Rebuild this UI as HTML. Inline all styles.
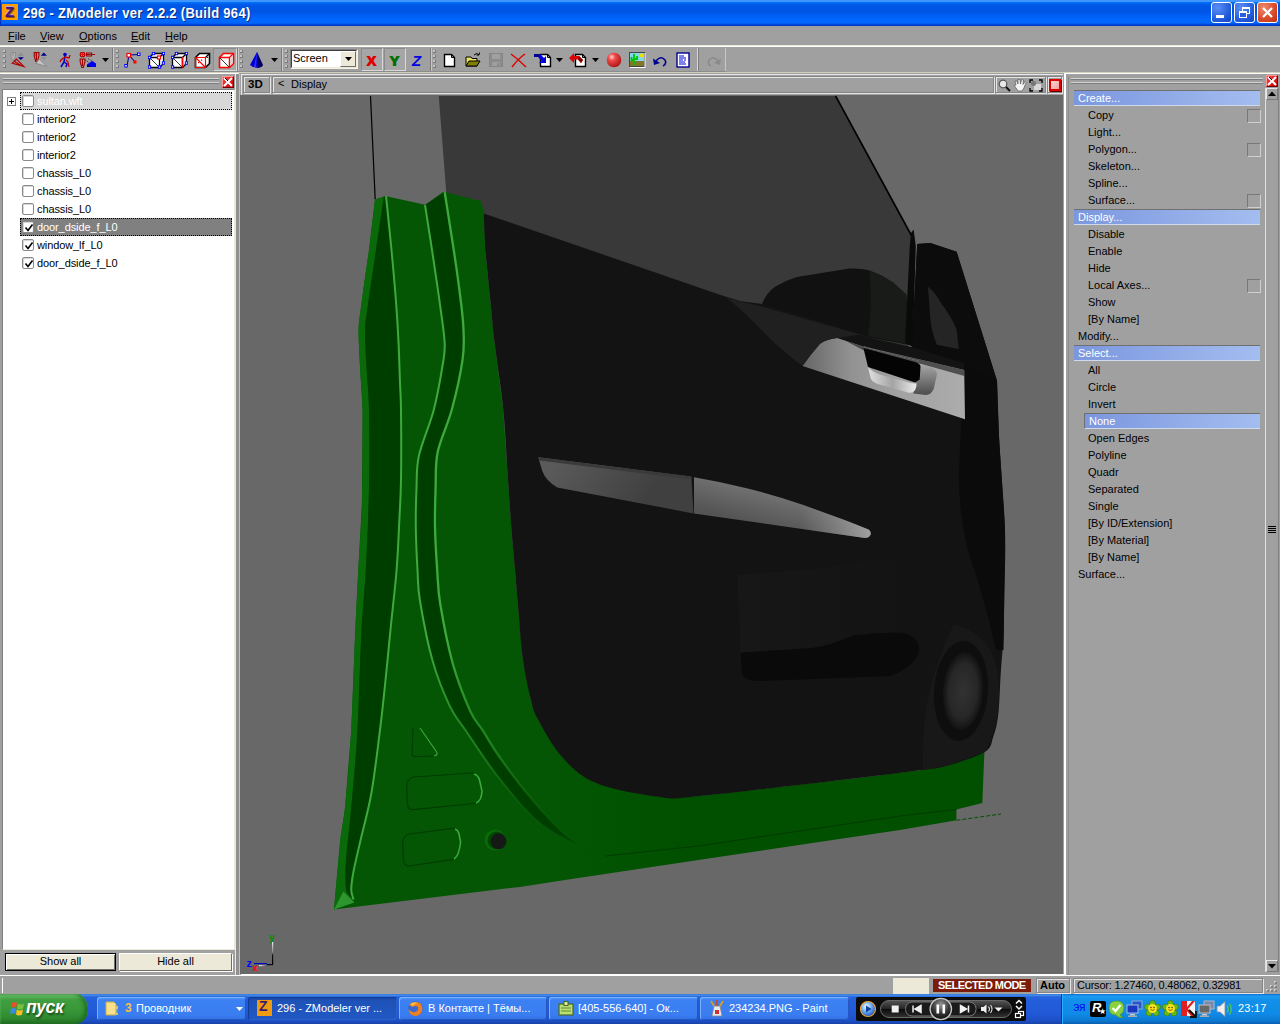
<!DOCTYPE html>
<html><head><meta charset="utf-8"><title>296 - ZModeler ver 2.2.2 (Build 964)</title>
<style>
*{box-sizing:border-box;margin:0;padding:0}
html,body{width:1280px;height:1024px;overflow:hidden;background:#a0a0a0;font-family:"Liberation Sans","DejaVu Sans",sans-serif;font-size:11px;color:#000}
.abs,#root *{position:absolute}
#root{position:relative;width:1280px;height:1024px;overflow:hidden;background:#a0a0a0}
#title{left:0;top:0;width:1280px;height:26px;background:linear-gradient(#3f96ff 0,#3f96ff 1.5px,#0070fa 2.5px,#0058e6 5px,#0055e5 12px,#0060f6 16px,#0068ff 20px,#0066fc 23px,#0048dc 24.5px,#0030c4 26px)}
#title .t{left:23px;top:5px;transform:scale(1,1.1);transform-origin:0 0;color:#fff;font-weight:bold;font-size:13px;white-space:nowrap;text-shadow:1px 1px 0 #0a2a80;letter-spacing:.3px}
#menu{left:0;top:26px;width:1280px;height:20px;background:#a0a0a0}
#menu span{top:4px;font-size:11px;white-space:nowrap}
u{text-decoration:underline;position:static!important}
#tb{left:0;top:46px;width:1280px;height:28px;background:#a0a0a0}

.hl{background:#fff}.sh{background:#808080}
.sunk{border:1px solid #858585;box-shadow:inset 1px 1px 0 #e4e4e4,1px 1px 0 #e4e4e4}
.rais{border:1px solid;border-color:#e8e8e8 #7a7a7a #7a7a7a #e8e8e8}
.grip{height:2px;border-top:1px solid #d4d4d4;border-bottom:1px solid #7c7c7c}
.xbtn{width:12px;height:12px;background:linear-gradient(135deg,#ff4040,#c80000);border:1px solid;border-color:#ff9a9a #700 #700 #ff9a9a}
#left .row{left:20px;width:212px;height:18px;font-size:11px;white-space:nowrap}
#left .row .cb{left:2px;top:3px;width:12px;height:12px;background:#fff;border:1px solid #8a8a8a;border-radius:2px;box-shadow:inset 1px 1px 0 #d8d8d8}
#left .row .tx{left:17px;top:3px;letter-spacing:-.1px}
#right .it{left:1088px;font-size:11px;white-space:nowrap}
#right .hd{left:1074px;width:186px;height:16px;background:linear-gradient(90deg,#7b97de,#a4bdf0);border-top:1px solid #6f6f6f;border-bottom:1px solid #d0d8ec;color:#fff;font-size:11px}
#right .hd span{left:4px;top:1px}
#right .sq{left:1247px;width:14px;height:14px;border:1px solid;border-color:#787878 #d0d0d0 #d0d0d0 #787878}

#task{left:0;top:994px;width:1280px;height:30px;background:linear-gradient(#3168d5 0,#4993e6 1px,#2663e0 3px,#245edb 6px,#2158d5 20px,#1c4fc4 27px,#1941a5 30px)}
#task .b{top:3px;height:23px;border-radius:3px;background:linear-gradient(#5a9bf5 0,#3c81f3 3px,#3a7df0 18px,#3272e6 23px);box-shadow:inset 1px 1px 0 #7ab0ff,inset -1px -1px 0 #2458c0;color:#fff;font-size:11px;white-space:nowrap;overflow:hidden}
#task .b.act{background:linear-gradient(#1a48a8 0,#1e52b7 4px,#2058c4 23px);box-shadow:inset 1px 1px 1px #123a90,inset -1px -1px 0 #2a60c8}
#task .b span{top:5px}
</style></head><body><div id="root">
<!--TITLE-->
<div id="title"><div style="left:0;top:0;width:1px;height:26px;background:#0030b8"></div><div style="left:2px;top:4px;width:16px;height:16px;background:#ff9c00"><span style="left:3px;top:-1px;font-size:15px;font-weight:bold;color:#401080;text-shadow:1px 1px 0 #905010,0 -1px 0 #c8a0d0">Z</span></div><span class="t">296 - ZModeler ver 2.2.2 (Build 964)</span>
<div style="left:1211px;top:2px;width:21px;height:21px;border:1px solid #fff;border-radius:3px;background:radial-gradient(circle at 30% 25%,#5b8ff5,#1d56d8 70%,#1443b8)"><div style="left:4px;top:12px;width:8px;height:3px;background:#fff"></div></div>
<div style="left:1234px;top:2px;width:21px;height:21px;border:1px solid #fff;border-radius:3px;background:radial-gradient(circle at 30% 25%,#5b8ff5,#1d56d8 70%,#1443b8)"><div style="left:7px;top:4px;width:8px;height:7px;border:1px solid #fff;border-top-width:2px"></div><div style="left:4px;top:8px;width:8px;height:7px;border:1px solid #fff;border-top-width:2px;background:#2a5fdc"></div></div>
<div style="left:1257px;top:2px;width:21px;height:21px;border:1px solid #fff;border-radius:3px;background:radial-gradient(circle at 30% 25%,#ee8a6c,#d8492a 60%,#b8300f)"><svg style="left:0;top:0" width="19" height="19"><path d="M5 5 L14 14 M14 5 L5 14" stroke="#fff" stroke-width="2.2"/></svg></div>
</div>
<div style="left:1279px;top:26px;width:1px;height:20px;background:#ece9d8"></div>
<!--MENU-->
<div id="menu"><span style="left:8px"><u>F</u>ile</span><span style="left:40px"><u>V</u>iew</span><span style="left:79px"><u>O</u>ptions</span><span style="left:131px"><u>E</u>dit</span><span style="left:165px"><u>H</u>elp</span></div>
<!--TOOLBAR-->
<div id="tb">
<div style="left:0;top:-1px;width:1280px;height:1px;background:#ece9d8"></div>
<div style="left:0;top:0;width:1280px;height:1px;background:#fff"></div>
<div style="left:0;top:26px;width:1280px;height:1px;background:#d4d0c0"></div><div style="left:0;top:27px;width:239px;height:1px;background:#fff"></div>
<!--TBICONS-->
<div style="left:3px;top:4px;width:3px;height:3px;background:#7a7a7a"></div><div style="left:3px;top:4px;width:2px;height:2px;background:#c4c4c4"></div><div style="left:3px;top:9px;width:3px;height:3px;background:#7a7a7a"></div><div style="left:3px;top:9px;width:2px;height:2px;background:#c4c4c4"></div><div style="left:3px;top:14px;width:3px;height:3px;background:#7a7a7a"></div><div style="left:3px;top:14px;width:2px;height:2px;background:#c4c4c4"></div><div style="left:3px;top:19px;width:3px;height:3px;background:#7a7a7a"></div><div style="left:3px;top:19px;width:2px;height:2px;background:#c4c4c4"></div>
<svg style="left:10px;top:6px" width="16" height="16" viewBox="0 0 16 16"><path d="M1 .5h4.500v4l-1.500 3.500h-1.500L1 4.500z M3.200 .5v4" fill="#b4b4b4" stroke="#8a8a8a" stroke-width=".9"/><path d="M2.200 11.300 L6.400 7.100 L14 14.600 Z M4.300 9.200 L11 13.500 M3.500 11.700 L9 13" fill="none" stroke="#b00000" stroke-width="1.200"/><path d="M5 10 L8 11.500" stroke="#f00" stroke-width="1"/><path d="M7.800 3.800 L10.800 .5 L13.900 3.800Z" fill="#8c8c8c"/><path d="M7.800 5.200 L13.900 5.200 L10.800 8Z" fill="#000090"/></svg>
<svg style="left:33px;top:6px" width="16" height="16" viewBox="0 0 16 16"><path d="M1.200 .5h4.700v3.500l-1.400 5.500h-1.800L1.200 4z M3.500 .5v8" fill="none" stroke="#a00000" stroke-width="1.100"/><path d="M2.800 1v3" stroke="#f00" stroke-width=".8"/><path d="M2.600 11.300 L6.400 7.100 L14 14.600 Z" fill="#c4c4c4" stroke="#8a8a8a" stroke-width="1"/><path d="M7.800 3.800 L10.800 .5 L13.900 3.800Z" fill="#000090"/><path d="M7.800 5.200 L13.900 5.200 L10.800 8Z" fill="#8c8c8c"/></svg>
<svg style="left:57px;top:6px" width="16" height="16" viewBox="0 0 16 16"><circle cx="8" cy="2.5" r="1.8" fill="#0000c8"/><path d="M8 4 L7 10 L4 15 M7 10 L10 12 L9 15" fill="none" stroke="#0000c8" stroke-width="1.5"/><path d="M8 5 L12 6 L13 3 M8 5 L4 8 L3 10" fill="none" stroke="#c00000" stroke-width="1.3"/><path d="M9 8 L11 10 L12 15" fill="none" stroke="#c00000" stroke-width="1.2"/></svg>
<svg style="left:79px;top:6px" width="18" height="16" viewBox="0 0 18 16"><circle cx="3.500" cy="2.500" r="2.300" fill="none" stroke="#a00000" stroke-width="1.100"/><path d="M3.500 .5v4M1.500 2.500h4" stroke="#f00" stroke-width=".9"/><path d="M7.500 1h5v3h-5z M12.500 2.500h3.500 M7.500 2.500h4" fill="none" stroke="#a00000" stroke-width="1.100"/><path d="M1.200 7h4.700v3l-1.600 5.500h-1.500L1.200 10z M3.500 7v7" fill="none" stroke="#a00000" stroke-width="1.100"/><path d="M6.500 8 L13 13 M9 6.500 L14.500 10" stroke="#222" stroke-width="1" stroke-dasharray="1 1"/><path d="M8 12.500 L13 9 L17 11.500 V15 H9Z" fill="#0000f0"/><path d="M8 12.500 L10.500 15 H8Z" fill="#000"/></svg>
<svg style="left:102px;top:12px" width="7" height="4"><path d="M0 0H7L3.5 4Z" fill="#000"/></svg>
<div style="left:112px;top:2px;width:1px;height:23px;background:#7c7c7c"></div><div style="left:113px;top:2px;width:1px;height:23px;background:#c8c8c8"></div>
<div style="left:116px;top:4px;width:3px;height:3px;background:#7a7a7a"></div><div style="left:116px;top:4px;width:2px;height:2px;background:#c4c4c4"></div><div style="left:116px;top:9px;width:3px;height:3px;background:#7a7a7a"></div><div style="left:116px;top:9px;width:2px;height:2px;background:#c4c4c4"></div><div style="left:116px;top:14px;width:3px;height:3px;background:#7a7a7a"></div><div style="left:116px;top:14px;width:2px;height:2px;background:#c4c4c4"></div><div style="left:116px;top:19px;width:3px;height:3px;background:#7a7a7a"></div><div style="left:116px;top:19px;width:2px;height:2px;background:#c4c4c4"></div>
<svg style="left:124px;top:6px" width="17" height="16" viewBox="0 0 17 16"><path d="M3 14 L5 3 L15 2.5 M5 3 L11 10" fill="none" stroke="#0000a0" stroke-width="1.1"/><rect x="3" y="1.5" width="3.5" height="3.5" fill="#fff" stroke="#f00" stroke-width="1.2"/><rect x="9.5" y="8.5" width="3" height="3" fill="#f00"/><rect x="13.5" y="1" width="2.5" height="2.5" fill="#fff" stroke="#00f" stroke-width="1"/><rect x=".8" y="12.5" width="2.5" height="2.5" fill="#fff" stroke="#00f" stroke-width="1"/></svg>
<svg style="left:148px;top:6px" width="17" height="17" viewBox="0 0 17 17"><path d="M1.5 5.5 L5.5 1.5 H15.5 V11.5 L11.5 15.5 H1.5Z" fill="#fff" stroke="#000" stroke-width="1.3"/><path d="M1.5 5.5 H11.5 V15.5 M11.5 5.5 L15.5 1.5" fill="none" stroke="#000" stroke-width="1.3"/><path d="M2 6 L11 15" stroke="#333" stroke-width="1"/><rect x="0.30000000000000004" y="4.3" width="2.4" height="2.4" fill="#fff" stroke="#00f" stroke-width="1"/><rect x="4.3" y="0.30000000000000004" width="2.4" height="2.4" fill="#fff" stroke="#00f" stroke-width="1"/><rect x="14.3" y="0.30000000000000004" width="2.4" height="2.4" fill="#fff" stroke="#00f" stroke-width="1"/><rect x="14.3" y="9.8" width="2.4" height="2.4" fill="#fff" stroke="#00f" stroke-width="1"/><rect x="10.3" y="13.8" width="2.4" height="2.4" fill="#fff" stroke="#00f" stroke-width="1"/><rect x="0.30000000000000004" y="13.8" width="2.4" height="2.4" fill="#fff" stroke="#00f" stroke-width="1"/><rect x="9.5" y="4" width="3" height="3" fill="#fff" stroke="#f00" stroke-width="1.2"/></svg>
<svg style="left:171px;top:6px" width="17" height="17" viewBox="0 0 17 17"><path d="M1.5 5.5 L5.5 1.5 H15.5 V11.5 L11.5 15.5 H1.5Z" fill="#fff" stroke="#000" stroke-width="1.3"/><path d="M1.5 5.5 H11.5 V15.5 M11.5 5.5 L15.5 1.5" fill="none" stroke="#000" stroke-width="1.3"/><path d="M2 6 L11 15" stroke="#333" stroke-width="1"/><rect x="0.30000000000000004" y="4.3" width="2.4" height="2.4" fill="#fff" stroke="#00f" stroke-width="1"/><rect x="4.3" y="0.30000000000000004" width="2.4" height="2.4" fill="#fff" stroke="#00f" stroke-width="1"/><rect x="14.3" y="0.30000000000000004" width="2.4" height="2.4" fill="#fff" stroke="#00f" stroke-width="1"/><rect x="14.3" y="9.8" width="2.4" height="2.4" fill="#fff" stroke="#00f" stroke-width="1"/><rect x="0.30000000000000004" y="13.8" width="2.4" height="2.4" fill="#fff" stroke="#00f" stroke-width="1"/><path d="M11.5 5 V15.5" stroke="#f00" stroke-width="1.6"/></svg>
<svg style="left:194px;top:6px" width="17" height="17" viewBox="0 0 17 17"><path d="M1.5 5.5 L5.5 1.5 H15.5 V11.5 L11.5 15.5 H1.5Z" fill="#fff" stroke="#000" stroke-width="1.6"/><path d="M11.5 5.5 L15.5 1.5" stroke="#000" stroke-width="1.3"/><path d="M1.5 5.5 H11.5 V15.5 H1.5Z M2 6 L11 15" fill="none" stroke="#f00" stroke-width="1.2"/><rect x="4" y="10" width="1.2" height="1.2" fill="#c00"/><rect x="7" y="7.5" width="1.2" height="1.2" fill="#c00"/><rect x="13" y="5" width="1" height="1" fill="#c00"/></svg>
<div style="left:213px;top:2px;width:24px;height:23px;background:#a6a6a6;border:1px solid;border-color:#8c8c8c #d8d8d8 #d8d8d8 #8c8c8c"></div>
<svg style="left:218px;top:6px" width="17" height="17" viewBox="0 0 17 17"><path d="M1.5 5.5 L5.5 1.5 H15.5 V11.5 L11.5 15.5 H1.5Z" fill="#fff" stroke="#f00" stroke-width="1.6"/><path d="M1.5 5.5 H11.5 V15.5 M11.5 5.5 L15.5 1.5" fill="none" stroke="#f00" stroke-width="1.5"/><path d="M2 6 L11 15" stroke="#333" stroke-width="1"/><path d="M12 6 L15 3 V11 L12 14Z" fill="#e8c8c8"/></svg>
<div style="left:237px;top:2px;width:1px;height:23px;background:#7c7c7c"></div><div style="left:238px;top:2px;width:1px;height:23px;background:#c8c8c8"></div>
<div style="left:240px;top:4px;width:3px;height:3px;background:#7a7a7a"></div><div style="left:240px;top:4px;width:2px;height:2px;background:#c4c4c4"></div><div style="left:240px;top:9px;width:3px;height:3px;background:#7a7a7a"></div><div style="left:240px;top:9px;width:2px;height:2px;background:#c4c4c4"></div><div style="left:240px;top:14px;width:3px;height:3px;background:#7a7a7a"></div><div style="left:240px;top:14px;width:2px;height:2px;background:#c4c4c4"></div><div style="left:240px;top:19px;width:3px;height:3px;background:#7a7a7a"></div><div style="left:240px;top:19px;width:2px;height:2px;background:#c4c4c4"></div>
<svg style="left:250px;top:6px" width="14" height="16" viewBox="0 0 14 16"><path d="M7 0 L0 13 L3 15 L8 16 L12 14.5 Z" fill="#0000d8"/><path d="M7 0 L8 16 L12 14.5 L13 13Z" fill="#000060"/><path d="M7 0 L4 15 L6 15.8Z" fill="#3030ff"/></svg>
<svg style="left:271px;top:12px" width="7" height="4"><path d="M0 0H7L3.5 4Z" fill="#000"/></svg>
<div style="left:281px;top:2px;width:1px;height:23px;background:#7c7c7c"></div><div style="left:282px;top:2px;width:1px;height:23px;background:#c8c8c8"></div>
<div style="left:285px;top:4px;width:3px;height:3px;background:#7a7a7a"></div><div style="left:285px;top:4px;width:2px;height:2px;background:#c4c4c4"></div><div style="left:285px;top:9px;width:3px;height:3px;background:#7a7a7a"></div><div style="left:285px;top:9px;width:2px;height:2px;background:#c4c4c4"></div><div style="left:285px;top:14px;width:3px;height:3px;background:#7a7a7a"></div><div style="left:285px;top:14px;width:2px;height:2px;background:#c4c4c4"></div><div style="left:285px;top:19px;width:3px;height:3px;background:#7a7a7a"></div><div style="left:285px;top:19px;width:2px;height:2px;background:#c4c4c4"></div>
<div style="left:290px;top:3px;width:68px;height:20px;border:1px solid;border-color:#808080 #f4f2e6 #f4f2e6 #808080;background:#fff"></div><div style="left:291px;top:4px;width:66px;height:18px;border:1px solid;border-color:#404040 #ece9d8 #ece9d8 #404040;background:#fff"><span style="left:1px;top:1px;font-size:11px">Screen</span><div style="left:48px;top:0;width:16px;height:16px;background:#ece9d8;border:1px solid;border-color:#fff #716f64 #716f64 #fff"></div><svg style="left:53px;top:6px" width="7" height="4"><path d="M0 0H7L3.5 4Z" fill="#000"/></svg></div>
<div style="left:361px;top:2px;width:22px;height:23px;background:#a6a6a6;border:1px solid;border-color:#8c8c8c #d8d8d8 #d8d8d8 #8c8c8c"></div><div style="left:384px;top:2px;width:22px;height:23px;background:#a6a6a6;border:1px solid;border-color:#8c8c8c #d8d8d8 #d8d8d8 #8c8c8c"></div>
<span style="left:366px;top:6px;font-size:15px;font-weight:bold;color:#e00000;text-shadow:1px 0 #e00000">X</span><span style="left:389px;top:6px;font-size:15px;font-weight:bold;color:#007000;text-shadow:1px 0 #007000">Y</span><span style="left:412px;top:6px;font-size:15px;font-weight:bold;font-style:italic;color:#0000e0">Z</span>
<div style="left:430px;top:2px;width:1px;height:23px;background:#7c7c7c"></div><div style="left:431px;top:2px;width:1px;height:23px;background:#c8c8c8"></div>
<div style="left:433px;top:4px;width:3px;height:3px;background:#7a7a7a"></div><div style="left:433px;top:4px;width:2px;height:2px;background:#c4c4c4"></div><div style="left:433px;top:9px;width:3px;height:3px;background:#7a7a7a"></div><div style="left:433px;top:9px;width:2px;height:2px;background:#c4c4c4"></div><div style="left:433px;top:14px;width:3px;height:3px;background:#7a7a7a"></div><div style="left:433px;top:14px;width:2px;height:2px;background:#c4c4c4"></div><div style="left:433px;top:19px;width:3px;height:3px;background:#7a7a7a"></div><div style="left:433px;top:19px;width:2px;height:2px;background:#c4c4c4"></div>
<svg style="left:443px;top:7px" width="13" height="15" viewBox="0 0 13 15"><path d="M1.5 1.5 H8.5 L11.5 4.5 V13.5 H1.5Z" fill="#fff" stroke="#000" stroke-width="1.4"/><path d="M8.5 1.5 V4.5 H11.5" fill="none" stroke="#000" stroke-width="1"/></svg>
<svg style="left:465px;top:6px" width="16" height="16" viewBox="0 0 16 16"><path d="M1 14 V5 H6 L7 6.5 H12 V14Z" fill="#e8e060" stroke="#000" stroke-width="1"/><path d="M1 14 L4 9 H15 L12 14Z" fill="#808000" stroke="#000" stroke-width="1"/><path d="M9 3 Q12 0 14 3 M14 3 L14.5 .5 M14 3 L11.5 3" fill="none" stroke="#000" stroke-width="1"/></svg>
<svg style="left:489px;top:6px" width="15" height="16" viewBox="0 0 15 16"><rect x=".5" y="1.5" width="13" height="13" fill="#8c8c8c" stroke="#858585"/><rect x="3" y="2" width="8" height="5" fill="#a0a0a0"/><rect x="3.5" y="10" width="7" height="4" fill="#a0a0a0"/><rect x="8" y="11" width="2" height="3" fill="#8c8c8c"/></svg>
<svg style="left:510px;top:6px" width="17" height="16" viewBox="0 0 17 16"><path d="M1 2 Q8 7 16 15 M15 2 Q9 6 2 15" fill="none" stroke="#e00000" stroke-width="1.5"/></svg>
<svg style="left:534px;top:6px" width="18" height="16" viewBox="0 0 18 16"><g transform="translate(5,1)"><path d="M1.5 1.5 H8.5 L11.5 4.5 V13.5 H1.5Z" fill="#fff" stroke="#000" stroke-width="1.4"/><path d="M8.5 1.5 V4.5 H11.5" fill="none" stroke="#000" stroke-width="1"/></g><path d="M0 2 H6 L10 6 L12 4 V11 H5 L7.5 8.5 L4 5 H0Z" fill="#0000e0"/><path d="M0 2H5V5H0Z" fill="#000090"/></svg>
<svg style="left:556px;top:12px" width="7" height="4"><path d="M0 0H7L3.5 4Z" fill="#000"/></svg>
<svg style="left:569px;top:6px" width="18" height="16" viewBox="0 0 18 16"><g transform="translate(5,1)"><path d="M1.5 1.5 H8.5 L11.5 4.5 V13.5 H1.5Z" fill="#fff" stroke="#000" stroke-width="1.4"/><path d="M8.5 1.5 V4.5 H11.5" fill="none" stroke="#000" stroke-width="1"/></g><path d="M0 6 L5 1 V4 H10 L14 8 L12 11 L9 7.5 H5 V11Z" fill="#e00000"/><path d="M10 4 L14 8 L12 11 L9 7.5Z" fill="#800000"/></svg>
<svg style="left:592px;top:12px" width="7" height="4"><path d="M0 0H7L3.5 4Z" fill="#000"/></svg>
<svg style="left:606px;top:6px" width="16" height="16" viewBox="0 0 16 16"><defs><radialGradient id="rb" cx=".35" cy=".3" r=".7"><stop offset="0" stop-color="#ffd0d0"/><stop offset=".35" stop-color="#f04848"/><stop offset="1" stop-color="#b01818"/></radialGradient></defs><circle cx="8" cy="8" r="7.3" fill="url(#rb)"/></svg>
<svg style="left:629px;top:6px" width="17" height="16" viewBox="0 0 17 16"><rect x=".5" y=".5" width="15" height="14" fill="#80d8e8" stroke="#444"/><rect x="1" y="9" width="14" height="5" fill="#807828"/><path d="M5 13 V2 M2.5 5 V8 H5 M8 4 V7 H5" fill="none" stroke="#00c000" stroke-width="1.8"/><circle cx="12.5" cy="3.5" r="2" fill="#f0e000"/><path d="M1 15.5 H16 V1" fill="none" stroke="#fff" stroke-width="1"/></svg>
<svg style="left:653px;top:9px" width="15" height="12" viewBox="0 0 15 12"><path d="M3 6 Q8 0 12 5 Q14 9 10 11" fill="none" stroke="#000090" stroke-width="1.6"/><path d="M0 3.5 L1 10 L7 8Z" fill="#000090"/></svg>
<svg style="left:676px;top:6px" width="14" height="16" viewBox="0 0 14 16"><rect x="1" y="1" width="12" height="14" fill="#fff" stroke="#000090" stroke-width="1.4"/><path d="M3 4H8M3 6H10M3 8H7M8 8H10M3 10H9M3 12H10" stroke="#0000e0" stroke-width="1.2"/></svg>
<div style="left:697px;top:2px;width:1px;height:23px;background:#d8d8d8"></div><div style="left:698px;top:2px;width:1px;height:23px;background:#7c7c7c"></div>
<svg style="left:707px;top:9px" width="15" height="12" viewBox="0 0 15 12"><path d="M11 6 Q6 0 2 5 Q0 9 4 11" fill="none" stroke="#8a8a8a" stroke-width="1.6"/><path d="M14 3.5 L13 10 L7 8Z" fill="#8a8a8a"/></svg>
<div style="left:725px;top:2px;width:1px;height:23px;background:#c8c8c8"></div>
<div style="left:0;top:25px;width:726px;height:1px;background:#8c8c8c"></div>
<!--/TBICONS-->
</div>
<div id="left" style="left:0;top:74px;width:240px;height:902px">
<div class="grip" style="left:3px;top:4px;width:216px"></div><div class="grip" style="left:3px;top:8px;width:216px"></div>
<div class="xbtn" style="left:222px;top:2px"><svg style="left:0;top:0" width="10" height="10"><path d="M1 1 L9 9 M9 1 L1 9" stroke="#fff" stroke-width="2"/><path d="M2 1 L5 4" stroke="#000" stroke-width="1"/></svg></div>
<div style="left:2px;top:15px;width:233px;height:861px;background:#fff;border:1px solid;border-color:#808080 #ece9d8 #ece9d8 #808080"></div>
<div class="row" style="top:18px;background:#d8d8d8;outline:1px dotted #000;outline-offset:-1px;color:#fff"><div class="cb"></div><span class="tx">sultan.wft</span></div>
<div class="row" style="top:36px;"><div class="cb"></div><span class="tx">interior2</span></div>
<div class="row" style="top:54px;"><div class="cb"></div><span class="tx">interior2</span></div>
<div class="row" style="top:72px;"><div class="cb"></div><span class="tx">interior2</span></div>
<div class="row" style="top:90px;"><div class="cb"></div><span class="tx">chassis_L0</span></div>
<div class="row" style="top:108px;"><div class="cb"></div><span class="tx">chassis_L0</span></div>
<div class="row" style="top:126px;"><div class="cb"></div><span class="tx">chassis_L0</span></div>
<div class="row" style="top:144px;background:#808080;outline:1px dotted #000;outline-offset:-1px;color:#fff"><div class="cb"><svg style="left:1px;top:1px" width="10" height="10"><path d="M1.5 4.5 L4 7.5 L8.5 1.5" fill="none" stroke="#000" stroke-width="1.6"/></svg></div><span class="tx">door_dside_f_L0</span></div>
<div class="row" style="top:162px;"><div class="cb"><svg style="left:1px;top:1px" width="10" height="10"><path d="M1.5 4.5 L4 7.5 L8.5 1.5" fill="none" stroke="#000" stroke-width="1.6"/></svg></div><span class="tx">window_lf_L0</span></div>
<div class="row" style="top:180px;"><div class="cb"><svg style="left:1px;top:1px" width="10" height="10"><path d="M1.5 4.5 L4 7.5 L8.5 1.5" fill="none" stroke="#000" stroke-width="1.6"/></svg></div><span class="tx">door_dside_f_L0</span></div>
<div style="left:7px;top:23px;width:9px;height:9px;border:1px solid #808080;background:#fff"><div style="left:1px;top:3px;width:5px;height:1px;background:#000"></div><div style="left:3px;top:1px;width:1px;height:5px;background:#000"></div></div>
<div style="left:5px;top:879px;width:111px;height:18px;background:#ece9d8;border:1px solid #000;box-shadow:inset 1px 1px 0 #fff,inset -1px -1px 0 #716f64;text-align:center;font-size:11px;line-height:15px">Show all</div>
<div style="left:119px;top:879px;width:113px;height:18px;background:#ece9d8;border:1px solid;border-color:#fff #716f64 #716f64 #fff;box-shadow:1px 1px 0 #fff;text-align:center;font-size:11px;line-height:15px">Hide all</div>
<div style="left:235px;top:0;width:1px;height:901px;background:#e8e8e8"></div><div style="left:236px;top:0;width:3px;height:902px;background:#909090"></div>
<div style="left:239px;top:0;width:1px;height:902px;background:#c4c0b0"></div>
</div>
<div id="vph" style="left:241px;top:74px;width:822px;height:21px">
<div style="left:0;top:0;width:822px;height:1px;background:#e8e8e8"></div><div style="left:0;top:0;width:1px;height:21px;background:#e8e8e8"></div>
<div class="sunk" style="left:2px;top:2px;width:27px;height:17px"><span style="left:4px;top:1px;font-weight:bold;font-size:11.5px">3D</span></div>
<div class="sunk" style="left:31px;top:2px;width:722px;height:17px"><span style="left:5px;top:0;font-size:11px">&lt;</span><span style="left:18px;top:1px;font-size:11px">Display</span></div>
<div class="sunk" style="left:754px;top:2px;width:51px;height:17px"></div>
<div class="sunk" style="left:806px;top:2px;width:15px;height:17px"></div>
<svg style="left:757px;top:5px" width="13" height="13"><circle cx="5" cy="5" r="3.8" fill="#e8e8e8" stroke="#555" stroke-width="1.2"/><path d="M8 8 L12 12" stroke="#111" stroke-width="2"/></svg>
<svg style="left:772px;top:4px" width="14" height="14"><path d="M3 7 L2 3 L4 3 L5 6 L5 1.5 L7 1.5 L7.5 6 L8.5 1.5 L10.5 2 L10 6.5 L12 3.5 L13 4.5 L11 10 L9 13 H5 L3 10 L1 7.5 Z" fill="#f4f4f4" stroke="#666" stroke-width=".8"/></svg>
<svg style="left:788px;top:5px" width="14" height="13"><path d="M1 4V1H4M10 1H13V4M13 9V12H10M4 12H1V9" fill="none" stroke="#000" stroke-width="1.3"/><rect x="5" y="5" width="7" height="6" fill="#d8d8d8"/><circle cx="4.5" cy="4.5" r="2.5" fill="#777"/></svg>
<div style="left:808px;top:5px;width:12px;height:12px;border:2px solid #e00000;background:linear-gradient(135deg,#ffd8d8,#f0a0a0);box-shadow:1px 1px 0 #600"></div>
</div>
<svg id="vp" style="left:240px;top:95px" width="823" height="879" viewBox="240 95 823 879">
<rect x="240" y="95" width="823" height="879" fill="#686868"/>
<!--SCENE-->
<defs><linearGradient id="gi" x1="0" x2="1"><stop offset="0" stop-color="#666"/><stop offset=".3" stop-color="#929292"/><stop offset=".6" stop-color="#a2a2a2"/><stop offset="1" stop-color="#acacac"/></linearGradient><linearGradient id="gb" x1="0" y1="0" x2="0" y2="1"><stop offset="0" stop-color="#a8a8a8"/><stop offset="1" stop-color="#4c4c4c"/></linearGradient><linearGradient id="gh2" x1="0" x2="1"><stop offset="0" stop-color="#e0e0e0"/><stop offset=".5" stop-color="#a4a4a4"/><stop offset="1" stop-color="#ececec"/></linearGradient><linearGradient id="gs" x1="0" x2="1"><stop offset="0" stop-color="#5c5c5c"/><stop offset=".7" stop-color="#6c6c6c"/><stop offset="1" stop-color="#b0b0b0"/></linearGradient><linearGradient id="gh" x1="0" y1="0" x2="1" y2="0"><stop offset="0" stop-color="#fff"/><stop offset="1" stop-color="#888"/></linearGradient><radialGradient id="spk"><stop offset="0" stop-color="#323232"/><stop offset=".7" stop-color="#272727"/><stop offset="1" stop-color="#121212"/></radialGradient><linearGradient id="l2f" gradientUnits="userSpaceOnUse" x1="0" y1="640" x2="0" y2="860"><stop offset="0" stop-color="#3caa3c"/><stop offset=".5" stop-color="#1c7e1c"/><stop offset="1" stop-color="#045604" stop-opacity="0"/></linearGradient></defs>
<polygon points="438.75,96 835.6,96 911.7,236 908,370 485,250 446.25,192.3" fill="#393939"/>
<path d="M370.5 96 L375.2 199.4" stroke="#000" stroke-width="1.2"/>
<path d="M835.6 96 L911.7 236" stroke="#000" stroke-width="1.6"/>
<defs><linearGradient id="gg" gradientUnits="userSpaceOnUse" x1="540" y1="0" x2="680" y2="0"><stop offset="0" stop-color="#045604"/><stop offset="1" stop-color="#005000"/></linearGradient></defs>
<polygon points="375,199.4 385.3,196 425.2,204.8 443,192 446,192.3 481.4,201.25 483.75,213.4 485.3,250 490,297 494.7,343.75 503.3,410 508,480 511.9,535 515,570 518.3,610 523,660 531,700 538.3,720 562.5,757.5 596,783 659.4,797 700,796 860,777.7 921,770 946.3,766 984.4,752.3 982.3,803 956.4,809.4 956.4,820.3 900,830 700,859.8 565,880 520,886.9 334,909.5 340.3,840 345,808 351.25,730 355.2,632.5 358.3,570 361.9,503.75 362.6,410 360.3,372 358.75,340.6 358.75,325 363.4,289 369,250 375,199.4" fill="url(#gg)"/>
<path d="M375 199.4C374.0 207.8 370.9 235.1 369 250C367.1 264.9 365.1 276.5 363.4 289C361.7 301.5 359.5 316.4 358.75 325C358.0 333.6 358.5 332.8 358.75 340.6C359.0 348.4 359.7 360.4 360.3 372C360.9 383.6 362.3 388.0 362.6 410C362.9 432.0 362.6 477.1 361.9 503.75C361.2 530.4 359.4 548.5 358.3 570C357.2 591.5 356.4 605.8 355.2 632.5C354.0 659.2 352.9 700.8 351.25 730C349.6 759.2 346.8 789.7 345 808C343.2 826.3 342.1 823.1 340.3 840C338.5 856.9 335.1 897.9 334 909.5L353.6 899.4C352.8 898.7 350.3 897.1 349 895C347.7 892.9 346.3 892.8 345.8 887C345.3 881.2 345.1 873.2 346 860C346.9 846.8 349.3 829.7 351.25 808C353.2 786.3 355.8 759.2 357.5 730C359.2 700.8 360.0 659.2 361.4 632.5C362.8 605.8 364.5 594.1 365.8 570C367.1 545.9 368.5 514.7 369 488C369.5 461.3 369.4 430.2 369 410C368.6 389.8 367.2 380.2 366.5 367C365.8 353.8 364.8 341.4 365 331C365.2 320.6 366.2 318.2 368 304.7C369.8 291.2 373.4 267.9 376 250C378.6 232.1 382.5 205.8 383.75 197Z" fill="#0a6a0a"/>
<path d="M383.75 197C382.5 205.8 378.6 232.1 376 250C373.4 267.9 369.8 291.2 368 304.7C366.2 318.2 365.2 320.6 365 331C364.8 341.4 365.8 353.8 366.5 367C367.2 380.2 368.6 389.8 369 410C369.4 430.2 369.5 461.3 369 488C368.5 514.7 367.1 545.9 365.8 570C364.5 594.1 362.8 605.8 361.4 632.5C360.0 659.2 359.2 700.8 357.5 730C355.8 759.2 353.2 786.3 351.25 808C349.3 829.7 346.9 846.8 346 860C345.1 873.2 345.3 881.2 345.8 887C346.3 892.8 347.7 892.9 349 895C350.3 897.1 352.8 898.7 353.6 899.4L353.6 899.4C353.2 897.8 351.2 894.7 351.25 890C351.2 885.3 352.0 879.3 353.6 871C355.2 862.7 357.6 853.1 360.6 840C363.6 826.9 368.3 810.8 371.5 792.5C374.7 774.2 377.6 748.9 380 730C382.4 711.1 383.8 696.9 385.6 679.4C387.4 661.9 389.2 642.9 391 624.7C392.8 606.5 395.2 587.6 396.6 570C398.0 552.4 398.7 534.0 399.4 519C400.1 504.0 400.7 498.2 401 480C401.3 461.8 401.2 426.2 401 410C400.8 393.8 400.4 394.0 400 383C399.6 372.0 399.2 356.8 398.6 343.75C398.0 330.7 397.4 320.3 396.25 304.7C395.1 289.1 393.2 268.1 391.5 250C389.8 231.9 386.9 205.0 386 196Z" fill="#003e00"/>
<path d="M425 205C426.2 212.5 429.5 233.4 432 250C434.5 266.6 437.9 289.1 440 304.7C442.1 320.3 444.3 333.4 444.7 343.75C445.1 354.1 444.1 356.0 442.3 367C440.5 378.0 437.6 395.3 433.75 410C429.9 424.7 421.9 442.3 419 455.3C416.1 468.3 417.0 476.1 416.5 488C416.0 499.9 415.6 513.3 415.8 527C416.0 540.7 416.8 557.7 417.5 570C418.2 582.3 417.5 585.9 420 601C422.5 616.1 427.6 643.1 432.5 660.6C437.4 678.1 444.2 694.4 449.7 706C455.2 717.6 456.9 717.8 465.3 730C473.7 742.2 486.9 763.4 500 779.4C513.1 795.4 526.6 813.4 543.75 826C560.9 838.6 592.6 850.0 603 855C613.4 860.0 605.5 855.8 606 856L606 856C599.8 853.0 581.5 847.9 568.75 838C556.0 828.1 541.2 809.9 529.7 796.5C518.2 783.1 507.9 768.6 500 757.5C492.1 746.4 487.5 737.8 482.5 730C477.5 722.2 474.9 721.6 470 710.6C465.1 699.6 457.8 681.5 452.8 663.75C447.9 646.0 442.9 620.0 440.3 604.4C437.7 588.8 438.1 582.9 437.2 570C436.3 557.1 435.3 540.7 435 527C434.7 513.3 435.2 500.5 435.6 488C436.1 475.5 435.0 465.0 437.7 452C440.4 439.0 447.5 425.4 451.7 410C455.9 394.6 460.7 373.1 462.6 359.4C464.6 345.7 463.8 338.4 463.4 328C463.0 317.6 461.9 310.0 460.3 297C458.7 284.0 456.4 267.4 453.75 250C451.1 232.6 446.2 201.9 444.7 192.3Z" fill="#003e00"/>
<path d="M386 196C386.9 205.0 389.8 231.9 391.5 250C393.2 268.1 395.1 289.1 396.25 304.7C397.4 320.3 398.0 330.7 398.6 343.75C399.2 356.8 399.6 372.0 400 383C400.4 394.0 400.8 393.8 401 410C401.2 426.2 401.3 461.8 401 480C400.7 498.2 400.1 504.0 399.4 519C398.7 534.0 398.0 552.4 396.6 570C395.2 587.6 392.8 606.5 391 624.7C389.2 642.9 387.4 661.9 385.6 679.4C383.8 696.9 382.4 711.1 380 730C377.6 748.9 374.7 774.2 371.5 792.5C368.3 810.8 363.6 826.9 360.6 840C357.6 853.1 355.2 862.7 353.6 871C352.0 879.3 351.2 885.3 351.25 890C351.2 894.7 353.2 897.8 353.6 899.4" fill="none" stroke="#3caa3c" stroke-width="2"/>
<path d="M425 205C426.2 212.5 429.5 233.4 432 250C434.5 266.6 437.9 289.1 440 304.7C442.1 320.3 444.3 333.4 444.7 343.75C445.1 354.1 444.1 356.0 442.3 367C440.5 378.0 437.6 395.3 433.75 410C429.9 424.7 421.9 442.3 419 455.3C416.1 468.3 417.0 476.1 416.5 488C416.0 499.9 415.6 513.3 415.8 527C416.0 540.7 416.8 557.7 417.5 570C418.2 582.3 417.5 585.9 420 601C422.5 616.1 427.6 643.1 432.5 660.6C437.4 678.1 444.2 694.4 449.7 706C455.2 717.6 456.9 717.8 465.3 730C473.7 742.2 486.9 763.4 500 779.4C513.1 795.4 526.6 813.4 543.75 826C560.9 838.6 592.6 850.0 603 855C613.4 860.0 605.5 855.8 606 856" fill="none" stroke="url(#l2f)" stroke-width="2"/>
<path d="M444.7 192.3C446.2 201.9 451.1 232.6 453.75 250C456.4 267.4 458.7 284.0 460.3 297C461.9 310.0 463.0 317.6 463.4 328C463.8 338.4 464.6 345.7 462.6 359.4C460.7 373.1 455.9 394.6 451.7 410C447.5 425.4 440.4 439.0 437.7 452C435.0 465.0 436.1 475.5 435.6 488C435.2 500.5 434.7 513.3 435 527C435.3 540.7 436.3 557.1 437.2 570C438.1 582.9 437.7 588.8 440.3 604.4C442.9 620.0 447.9 646.0 452.8 663.75C457.8 681.5 465.1 699.6 470 710.6C474.9 721.6 477.5 722.2 482.5 730C487.5 737.8 492.1 746.4 500 757.5C507.9 768.6 518.2 783.1 529.7 796.5C541.2 809.9 556.0 828.1 568.75 838C581.5 847.9 599.8 853.0 606 856" fill="none" stroke="url(#l2f)" stroke-width="2.3"/>
<polygon points="334,909.5 343.4,891.5 354.4,902.5" fill="#2e962e"/>
<polyline points="606,856 700,845.8 900,816 956.4,809.4" fill="none" stroke="#003a00" stroke-width="1"/>
<path d="M956.4 820.3 L1001 814" stroke="#005000" stroke-width="1" stroke-dasharray="4 2"/>
<path d="M413 728 L412 754 Q412 757 415 756.7 L434 756 Q439 755 436 751 L420 728" fill="#045604" stroke="#013c01" stroke-width="1"/><path d="M420 728 L436 751 Q439 755 434 756" fill="none" stroke="#3caa3c" stroke-width="1.2"/>
<path d="M414 777 L472 773 Q477 773 479 779 L482 790 Q482 802 474 803.5 L413 809.7 Q408 810 407.5 804 L406.7 786 Q407 778 414 777Z" fill="#045604" stroke="#013c01" stroke-width="1.2"/><path d="M474 774 Q478 775 479.5 780 L482 791 Q481.5 801 476 803" fill="none" stroke="#3caa3c" stroke-width="1.6"/>
<path d="M409 834 L453 828.4 Q457 828.5 458.5 833 L460.6 841 Q459 857 452 859.7 L409 866 Q404 866 403.5 860 L402.5 845 Q403 835 409 834Z" fill="#045604" stroke="#013c01" stroke-width="1.2"/><path d="M455 829 Q458 830 459 834 L460.6 842 Q459 856 454 859" fill="none" stroke="#3caa3c" stroke-width="1.6"/>
<circle cx="495" cy="840" r="10.5" fill="#0a6a0a"/><circle cx="496.5" cy="840.5" r="9" fill="#024802"/><circle cx="498.5" cy="841.3" r="8" fill="#161a16"/>
<path d="M483.75 213.4 L720.6 295 L740 301 L762 304 L866.9 337 L911.7 347 L917.2 244 L930.3 243 L956.6 251.7L997 380.8C997.4 390.7 997.9 415.1 999.2 440C1000.5 464.9 1004.2 503.3 1005 530C1005.8 556.7 1004.5 582.0 1004.2 600C1003.9 618.0 1004.0 626.2 1003.4 638C1002.8 649.8 1001.8 658.3 1000.9 671C1000.0 683.7 999.6 703.0 998.3 714C997.0 725.0 995.5 730.6 993.2 737C990.9 743.4 992.2 747.5 984.4 752.3C976.6 757.1 956.9 763.0 946.3 766C935.7 769.0 935.4 768.0 921 770C906.6 772.0 896.8 773.4 860 777.7C823.2 782.0 733.4 792.8 700 796C666.6 799.2 676.7 799.2 659.4 797C642.1 794.8 612.1 789.6 596 783C579.9 776.4 572.1 768.0 562.5 757.5C552.9 747.0 543.5 729.6 538.3 720C533.0 710.4 533.5 710.0 531 700C528.5 690.0 525.1 675.0 523 660C520.9 645.0 519.6 625.0 518.3 610C517.0 595.0 516.1 582.5 515 570C513.9 557.5 513.1 550.0 511.9 535C510.7 520.0 509.4 500.8 508 480C506.6 459.2 505.5 432.7 503.3 410C501.1 387.3 496.9 362.6 494.7 343.75C492.5 324.9 491.6 312.6 490 297C488.4 281.4 486.1 257.8 485.3 250Z" fill="#131313"/>
<path d="M761.9 304.2 Q766 293 775 286.7 Q786 280 796.9 276.9 L849.4 268.6 Q860 268 869 270.3 Q882 275 893 282.4 L906.3 294.4 L909 345 L866.9 337 Z" fill="#101110"/>
<path d="M869 270.3 Q882 275 893 282.4 L906.3 294.4 L908.5 344 L868 336 Q873 300 869 270.3Z" fill="#181b18"/>
<polygon points="911,233 913.6,229.5 915.8,246 912.8,347 905,342.5 909.8,246" fill="#0a0a0a"/>
<path d="M964.2 363.3 L997 380.8 L999.2 440 L1005 530 L1004.2 600 L1003.500 650 L996 650 Q985 600 968 551 Q958 510 959 469 Q962 410 964.2 363.3Z" fill="#0b0b0b"/>
<polygon points="917.2,244 930.3,243 956.6,251.7 997,380.8 964.2,363.3 912,347" fill="#0b0c0b"/>
<path d="M928 286.7 Q935 292 941 303 Q952 318 956.6 329.4 L958.75 349 L936.9 344.7 Q931 330 930.3 318.4 Z" fill="#252525"/>
<path d="M802.5 366 Q810 355 820 343.75 Q827 339 837 338 L863.4 346.6 L930.6 362 L964.2 370 L965 419.2 Z" fill="url(#gi)"/>
<polygon points="845,340.5 863.4,346.6 930.6,362 964.2,370 964.4,376 925,365 863,350" fill="#2a2a2a" opacity=".7"/>
<path d="M726 298 L761 306.25 L860 334.4 L837 338 Q827 339 820 343.75 Q810 355 802.5 366 Q787.500 355 770 338.75 Q758 326 750 318.75 Q738 306 726 298Z" fill="#202020"/>
<path d="M919.7 363.75 L930.6 366.9 Q937.500 370 936.9 374.7 L933.75 388.75 Q931 395 926 395 L913.4 393.4 L916 380Z" fill="url(#gb)"/>
<path d="M863.4 348 L915 362 Q921 364 920.5 366.9 L919.7 379.4 L915 382.5 L868 366.9 Z" fill="#040404"/>
<path d="M868 367 Q872 372 880 374.500 L905 381.500 Q912 384 916.6 383.3 Q916.500 388 915 390.3 Q912 393.500 908.75 392.7 L877.5 384 Q871 381 870.5 377.8 Z" fill="url(#gh2)"/>
<path d="M864 346.800 L920 361.500" stroke="#6e6e6e" stroke-width="1" stroke-dasharray="3 1.500"/>
<defs><linearGradient id="gl" gradientUnits="userSpaceOnUse" x1="560" y1="455" x2="640" y2="510"><stop offset="0" stop-color="#5a5a5a"/><stop offset="1" stop-color="#404040"/></linearGradient><linearGradient id="gr" gradientUnits="userSpaceOnUse" x1="780" y1="490" x2="770" y2="528"><stop offset="0" stop-color="#767676"/><stop offset="1" stop-color="#545454"/></linearGradient><linearGradient id="gt" gradientUnits="userSpaceOnUse" x1="800" y1="0" x2="871" y2="0"><stop offset="0" stop-color="#909090" stop-opacity="0"/><stop offset="1" stop-color="#a8a8a8" stop-opacity=".9"/></linearGradient></defs>
<path d="M538.2 457.3 L691.3 476.4 L693.5 513.4 L557.3 487.4 Q546 481 542.3 471 Z" fill="url(#gl)"/>
<path d="M538.2 457.3 L691.3 476.4 L691.6 479.5 L539.5 460.5 Z" fill="#3a3a3a"/>
<path d="M694 477.3 Q722 482 748.75 488.75 Q778 496 803.4 505 L844.5 520 Q860 526 869 529.8 Q871.5 532.5 870.4 535 Q869 538 865 538 L694 513.4 Z" fill="url(#gr)"/><path d="M694 477.3 Q722 482 748.75 488.75 Q778 496 803.4 505 L844.5 520 Q860 526 869 529.8 Q871.5 532.5 870.4 535 Q869 538 865 538 L694 513.4 Z" fill="url(#gt)"/>
<defs><linearGradient id="gp" gradientUnits="userSpaceOnUse" x1="738" y1="0" x2="900" y2="0"><stop offset="0" stop-color="#171717"/><stop offset=".6" stop-color="#151515"/><stop offset="1" stop-color="#131313"/></linearGradient></defs>
<path d="M737.5 574.7 L828 568 Q860 563 864 560.6 L900 560 L900 632.5 Q870 633 853 635.6 Q830 646 812.5 648 L740.6 652.8 Z" fill="url(#gp)"/>
<path d="M740.6 652.8 L812.5 648 Q830 646 853 635.6 Q880 632 905 633 Q922 640 918.4 653.3 Q912 668 890 676 L759 681 Q743 680 742 673 Z" fill="#0a0a0a"/>
<path d="M954 625 Q975 628 990 650 Q1002 670 998 714 Q995 735 984.4 752.3 L946.3 766 L923 770 Q922 720 930 690 Q940 650 954 625Z" fill="#181818"/>
<ellipse cx="961" cy="691" rx="27" ry="50" fill="#0e0e0e" transform="rotate(4 961 691)"/>
<ellipse cx="963" cy="691" rx="20" ry="39" fill="url(#spk)" transform="rotate(4 963 691)"/>
<defs><linearGradient id="ay" x1="0" y1="0" x2="0" y2="1"><stop offset="0" stop-color="#f0f0f0"/><stop offset=".45" stop-color="#888"/><stop offset=".6" stop-color="#111"/><stop offset="1" stop-color="#000"/></linearGradient><linearGradient id="ax" x1="0" x2="1"><stop offset="0" stop-color="#f0f0f0"/><stop offset="1" stop-color="#555"/></linearGradient></defs>
<rect x="272" y="942" width="1.2" height="22.500" fill="url(#ay)"/><rect x="254" y="963" width="13" height="1.200" fill="#0000c0"/><rect x="267" y="964" width="6" height="1.200" fill="#000018"/><rect x="259" y="965" width="8" height="1.200" fill="url(#ax)"/>
<text x="269" y="941" font-family="Liberation Sans,sans-serif" font-size="10" font-weight="bold" fill="#009000">y</text><text x="246.500" y="967" font-family="Liberation Sans,sans-serif" font-size="11" font-weight="bold" fill="#0000ff">z</text><text x="252.500" y="971" font-family="Liberation Sans,sans-serif" font-size="9" font-weight="bold" fill="#ff0000">x</text>
<!--/SCENE-->
</svg>
<div style="left:241px;top:974px;width:824px;height:2px;background:#fff"></div>

<div id="right" style="left:0;top:0;width:1280px;height:1024px;pointer-events:none">
<div style="left:1064px;top:73px;width:216px;height:1px;background:#fff"></div><div style="left:1064px;top:73px;width:2px;height:903px;background:#fff"></div><div style="left:1068px;top:76px;width:1px;height:899px;background:#8c8c8c"></div>
<div class="grip" style="left:1071px;top:78px;width:192px"></div><div class="grip" style="left:1071px;top:82px;width:192px"></div>
<div class="xbtn" style="left:1266px;top:75px"><svg style="left:0;top:0" width="10" height="10"><path d="M1 1 L9 9 M9 1 L1 9" stroke="#fff" stroke-width="2"/><path d="M2 1 L5 4" stroke="#000" stroke-width="1"/></svg></div>
<div class="hd" style="top:90px"><span>Create...</span></div>
<span class="it" style="top:109px">Copy</span>
<div class="sq" style="top:109px"></div>
<span class="it" style="top:126px">Light...</span>
<span class="it" style="top:143px">Polygon...</span>
<div class="sq" style="top:143px"></div>
<span class="it" style="top:160px">Skeleton...</span>
<span class="it" style="top:177px">Spline...</span>
<span class="it" style="top:194px">Surface...</span>
<div class="sq" style="top:194px"></div>
<div class="hd" style="top:209px"><span>Display...</span></div>
<span class="it" style="top:228px">Disable</span>
<span class="it" style="top:245px">Enable</span>
<span class="it" style="top:262px">Hide</span>
<span class="it" style="top:279px">Local Axes...</span>
<div class="sq" style="top:279px"></div>
<span class="it" style="top:296px">Show</span>
<span class="it" style="top:313px">[By Name]</span>
<span class="it" style="left:1078px;top:330px">Modify...</span>
<div class="hd" style="top:345px"><span>Select...</span></div>
<span class="it" style="top:364px">All</span>
<span class="it" style="top:381px">Circle</span>
<span class="it" style="top:398px">Invert</span>
<div class="hd" style="top:413px;left:1084px;width:176px;border-left:1px solid #6f6f6f"><span>None</span></div>
<span class="it" style="top:432px">Open Edges</span>
<span class="it" style="top:449px">Polyline</span>
<span class="it" style="top:466px">Quadr</span>
<span class="it" style="top:483px">Separated</span>
<span class="it" style="top:500px">Single</span>
<span class="it" style="top:517px">[By ID/Extension]</span>
<span class="it" style="top:534px">[By Material]</span>
<span class="it" style="top:551px">[By Name]</span>
<span class="it" style="left:1078px;top:568px">Surface...</span>
<div style="left:1265px;top:88px;width:1px;height:884px;background:#e0e0e0"></div><div style="left:1278px;top:88px;width:1px;height:884px;background:#808080"></div>
<div class="rais" style="left:1266px;top:88px;width:12px;height:12px"><svg style="left:0;top:0" width="10" height="10"><path d="M1 7 L5 2.5 L9 7 Z" fill="#000"/></svg></div>
<div class="rais" style="left:1266px;top:960px;width:12px;height:12px"><svg style="left:0;top:0" width="10" height="10"><path d="M1 3 L5 7.5 L9 3 Z" fill="#000"/></svg></div>
<div style="left:1268px;top:526px;width:8px;height:1px;background:#000;box-shadow:0 2px 0 #000,0 4px 0 #000,0 6px 0 #000"></div>
</div>
<div id="status" style="left:0;top:975px;width:1280px;height:19px;background:#a0a0a0">
<div style="left:0;top:0;width:1280px;height:1px;background:#fff"></div>
<div style="left:2px;top:3px;width:1px;height:15px;background:#fff"></div>
<div style="left:893px;top:3px;width:36px;height:16px;background:#ece9d8"></div>
<div style="left:933px;top:4px;width:98px;height:13px;background:#7c1c08;color:#fff;font-weight:bold;font-size:11px;line-height:13px;white-space:nowrap"><span style="left:5px;top:0;letter-spacing:-.55px">SELECTED MODE</span></div>
<div class="sunk" style="left:1036px;top:3px;width:34px;height:15px"><span style="left:3px;top:0;font-weight:bold;font-size:11px">Auto</span></div>
<div class="sunk" style="left:1073px;top:3px;width:190px;height:15px"><span style="left:3px;top:0;font-size:11px;white-space:nowrap;letter-spacing:-.2px">Cursor: 1.27460, 0.48062, 0.32981</span></div>
</div>
<svg style="left:1265px;top:980px" width="14" height="14"><g fill="#d0d0d0"><rect x="9" y="9" width="2" height="2"/><rect x="5" y="9" width="2" height="2"/><rect x="1" y="9" width="2" height="2"/><rect x="9" y="5" width="2" height="2"/><rect x="5" y="5" width="2" height="2"/><rect x="9" y="1" width="2" height="2"/></g><g fill="#808080"><rect x="10" y="10" width="2" height="2"/><rect x="6" y="10" width="2" height="2"/><rect x="2" y="10" width="2" height="2"/><rect x="10" y="6" width="2" height="2"/><rect x="6" y="6" width="2" height="2"/><rect x="10" y="2" width="2" height="2"/></g></svg>
<div id="task">
<div style="left:0;top:0;width:88px;height:30px;border-radius:0 12px 12px 0/0 15px 15px 0;background:linear-gradient(#2f8a2f 0,#5cb85c 2px,#3f9e3f 6px,#3a9a3a 14px,#2f8a2f 24px,#236e23 30px);box-shadow:inset -3px 0 4px #1f6a1f,inset 0 2px 2px #7ad07a"></div>
<svg style="left:9px;top:6px" width="18" height="18" viewBox="0 0 18 18"><path d="M3 3 Q6 1 8 3 L7 8 Q5 6 2 8Z" fill="#e8502a"/><path d="M9 3.5 Q12 5.5 15 3.5 L14 8.5 Q11 10.5 8 8.5Z" fill="#7ac043"/><path d="M1.8 9 Q5 7 7 9 L6 14 Q3.5 12 1 14Z" fill="#3a8ae8"/><path d="M7.8 9.5 Q11 11.5 14 9.5 L13 14.5 Q10 16.5 7 14.5Z" fill="#f8c020"/></svg>
<span style="left:26px;top:3px;font-size:17.5px;font-weight:bold;font-style:italic;color:#fff;text-shadow:1px 2px 2px #1a4a1a;letter-spacing:-.4px">пуск</span>
<div class="b" style="left:97px;width:149px"><svg style="left:8px;top:3px" width="17" height="17"><path d="M1 2 H9 L11 4 V15 H1Z" fill="#f8e08a" stroke="#c8a848" stroke-width="1"/><path d="M11 6 H13 V15 H11Z" fill="#e0c060"/><rect x="11.5" y="9" width="1.5" height="4" fill="#4898e8"/></svg><span style="left:28px;font-weight:bold;color:#f8c040;font-size:12px;top:4px">3</span><span style="left:39px">Проводник</span><svg style="left:139px;top:10px" width="7" height="4"><path d="M0 0H7L3.5 4Z" fill="#fff"/></svg></div>
<div class="b act" style="left:248px;width:149px"><div style="left:9px;top:3px;width:15px;height:16px;background:#f09a10"><span style="left:2px;top:-2px!important;font-size:14px;font-weight:bold;color:#3a1a70">Z</span></div><span style="left:29px">296 - ZModeler ver ...</span></div>
<div class="b" style="left:399px;width:148px"><svg style="left:8px;top:3px" width="17" height="17"><circle cx="8.5" cy="8.5" r="7.5" fill="#3a6ad0"/><path d="M2 5 Q6 0 13 3 Q16 6 15 11 Q13 16 8 16 Q2 15 1.5 9 Q4 13 8 12 Q12 11 11 7 Q8 5 6 7 Q4 6 2 5Z" fill="#f08020"/><path d="M3 4 Q7 1 11 3 Q8 3 6 6Z" fill="#f8c040"/></svg><span style="left:29px">В Контакте | Тёмы...</span></div>
<div class="b" style="left:549px;width:149px"><svg style="left:9px;top:4px" width="16" height="15"><rect x="1" y="3" width="14" height="11" fill="#b8e070" stroke="#486820" stroke-width="1.2"/><rect x="6" y="0.5" width="4" height="4" fill="#d8f098" stroke="#486820" stroke-width="1"/><path d="M3 7H13M3 10H13" stroke="#688838" stroke-width="1"/></svg><span style="left:29px">[405-556-640] - Ок...</span></div>
<div class="b" style="left:700px;width:149px"><svg style="left:9px;top:3px" width="16" height="17"><path d="M3 16 L5 6 H11 L13 16Z" fill="#e8e8f0" stroke="#888" stroke-width=".8"/><path d="M5 6 L2 1 M8 6 V0 M11 6 L14 1" stroke="#d8a020" stroke-width="1.8"/><path d="M8 6 V0" stroke="#c03030" stroke-width="1.5"/><rect x="6" y="10" width="4" height="4" fill="#d03030"/></svg><span style="left:29px">234234.PNG - Paint</span></div>
<div style="left:856px;top:3px;width:170px;height:24px;background:#0c0c0c;border-radius:2px"></div>
<svg style="left:856px;top:3px" width="170" height="24" viewBox="0 0 170 24">
<defs><linearGradient id="wb" x1="0" y1="0" x2="0" y2="1"><stop offset="0" stop-color="#555"/><stop offset=".5" stop-color="#222"/><stop offset=".5" stop-color="#0a0a0a"/><stop offset="1" stop-color="#333"/></linearGradient>
<radialGradient id="wp" cx=".5" cy=".3" r=".7"><stop offset="0" stop-color="#999"/><stop offset=".6" stop-color="#333"/><stop offset="1" stop-color="#111"/></radialGradient>
<radialGradient id="wl" cx=".4" cy=".35" r=".7"><stop offset="0" stop-color="#fff"/><stop offset=".5" stop-color="#68a8f0"/><stop offset="1" stop-color="#1848b0"/></radialGradient></defs>
<circle cx="12" cy="12" r="7.5" fill="url(#wl)" stroke="#e8a030" stroke-width="1.2"/><path d="M10 8.500 L15.500 12 L10 15.500Z" fill="#1040a0"/>
<rect x="24.500" y="3.500" width="131" height="17" rx="8.500" fill="url(#wb)" stroke="#6a6a6a" stroke-width="1"/>
<rect x="49.500" y="5" width="70.500" height="14" rx="6.500" fill="#1a1a1a" stroke="#777" stroke-width="1"/>
<rect x="35.700" y="8.500" width="7" height="7" fill="#f0f0f0"/>
<path d="M57 8.500 V15.500 M65 8.500 L59 12 L65 15.500Z" fill="#f0f0f0" stroke="#f0f0f0" stroke-width="1.500"/>
<circle cx="84.800" cy="12" r="10.700" fill="url(#wp)" stroke="#c8c8c8" stroke-width="1.300"/>
<path d="M81.800 7.500 V16.500 M87.800 7.500 V16.500" stroke="#fff" stroke-width="2.600"/>
<path d="M112.500 8.500 V15.500 M104.500 8.500 L110.500 12 L104.500 15.500Z" fill="#f0f0f0" stroke="#f0f0f0" stroke-width="1.500"/>
<path d="M125 10 H127.500 L130.500 7.500 V16.500 L127.500 14 H125Z" fill="#f0f0f0"/><path d="M132.500 9.500 Q134.500 12 132.500 14.500 M134.500 8 Q137.500 12 134.500 16" fill="none" stroke="#ddd" stroke-width="1.100"/>
<path d="M138.500 10.500 H146.500 L142.500 14.500Z" fill="#f0f0f0"/>
<path d="M160 6.500 L163 3.500 L166 6.500 M160 9 L163 12 L166 9" fill="none" stroke="#fff" stroke-width="1.500"/>
<rect x="162.500" y="14.500" width="5" height="4" fill="none" stroke="#fff" stroke-width="1.200"/><rect x="159.500" y="16.500" width="5" height="4" fill="#0c0c0c" stroke="#fff" stroke-width="1.200"/>
</svg>
<div style="left:1061px;top:0;width:219px;height:30px;background:linear-gradient(#0d6ad0 0,#1c9bf0 2px,#1290ea 6px,#0f8ae6 20px,#0c78d0 27px,#0a5cb0 30px);box-shadow:inset 1px 0 0 #0a3a90,inset 2px 0 0 #28b0ff"></div>
<span style="left:1073px;top:8px;font-size:11px;color:#0010f0;letter-spacing:-.5px;font-family:'Liberation Mono','DejaVu Sans Mono',monospace">ЭЯ</span>
<div style="left:1090px;top:7px;width:16px;height:16px;background:#000;border-radius:2px"><span style="left:2px;top:-1px;font-size:13px;font-weight:bold;font-style:italic;color:#fff">R</span><span style="left:9px;top:6px;font-size:8px;color:#fff">★</span></div>
<svg style="left:1108px;top:6px" width="17" height="18"><path d="M8.500 1 Q16 1 16 8 Q16 13 12 14.500 Q13 17 15 17.500 Q10 18 8 15 Q1 15 1 8 Q1 1 8.500 1Z" fill="#8ad040" stroke="#58a020" stroke-width=".8"/><path d="M4.500 8 L7.500 11 L12.500 5" fill="none" stroke="#fff" stroke-width="2.200"/></svg>
<svg style="left:1126px;top:6px" width="17" height="18"><rect x="6" y="1" width="10" height="8" fill="#2858c8" stroke="#90a8d8"/><rect x="1" y="5" width="11" height="8" fill="#1838c0" stroke="#a8b8e0"/><rect x="4" y="14" width="5" height="1.500" fill="#ccc"/><rect x="2" y="15.500" width="9" height="1.500" fill="#aaa"/></svg>
<svg style="left:1144px;top:6px" width="17" height="18"><g fill="#68b818" stroke="#3a7808" stroke-width=".6"><circle cx="8.500" cy="3.500" r="3"/><circle cx="3.500" cy="7" r="3"/><circle cx="13.500" cy="7" r="3"/><circle cx="5" cy="13" r="3"/><circle cx="12" cy="13" r="3"/></g><circle cx="8.500" cy="8.500" r="4.500" fill="#f8e020"/><path d="M6.500 9.500 Q8.500 11.500 10.500 9.500" fill="none" stroke="#604000" stroke-width=".8"/><circle cx="7" cy="7.500" r=".7" fill="#402000"/><circle cx="10" cy="7.500" r=".7" fill="#402000"/></svg>
<svg style="left:1162px;top:6px" width="17" height="18"><g fill="#68b818" stroke="#3a7808" stroke-width=".6"><circle cx="8.500" cy="3.500" r="3"/><circle cx="3.500" cy="7" r="3"/><circle cx="13.500" cy="7" r="3"/><circle cx="5" cy="13" r="3"/><circle cx="12" cy="13" r="3"/></g><circle cx="8.500" cy="8.500" r="4.500" fill="#f8e020"/><path d="M6.500 9.500 Q8.500 11.500 10.500 9.500" fill="none" stroke="#604000" stroke-width=".8"/><circle cx="7" cy="7.500" r=".7" fill="#402000"/><circle cx="10" cy="7.500" r=".7" fill="#402000"/></svg>
<svg style="left:1180px;top:6px" width="17" height="18"><rect x="1" y="1" width="14" height="15" fill="#f4f4f4"/><path d="M1 1 H7 V7 L12 1 H15 L8 9 L15 16 H11 L7 11 V16 H1Z" fill="#e02020"/><path d="M9 10 L16 17 M16 11 V17 H10" fill="none" stroke="#111" stroke-width="1.800"/></svg>
<svg style="left:1198px;top:6px" width="17" height="18"><rect x="6" y="1" width="10" height="8" fill="#7888a8" stroke="#b0b8c8"/><rect x="1" y="5" width="11" height="8" fill="#686868" stroke="#c0c0c0"/><rect x="4" y="14" width="5" height="1.500" fill="#ccc"/><rect x="2" y="15.500" width="9" height="1.500" fill="#aaa"/></svg>
<svg style="left:1216px;top:6px" width="17" height="18"><path d="M1 6 H4 L9 1.500 V16.500 L4 12 H1Z" fill="#f0f0f0" stroke="#889" stroke-width=".8"/><path d="M11 5.500 Q13.500 9 11 12.500 M13.500 3.500 Q17 9 13.500 14.500" fill="none" stroke="#50c850" stroke-width="1.300"/></svg>
<span style="left:1238px;top:8px;font-size:11px;color:#fff;letter-spacing:.2px">23:17</span>
</div>
</div></body></html>
